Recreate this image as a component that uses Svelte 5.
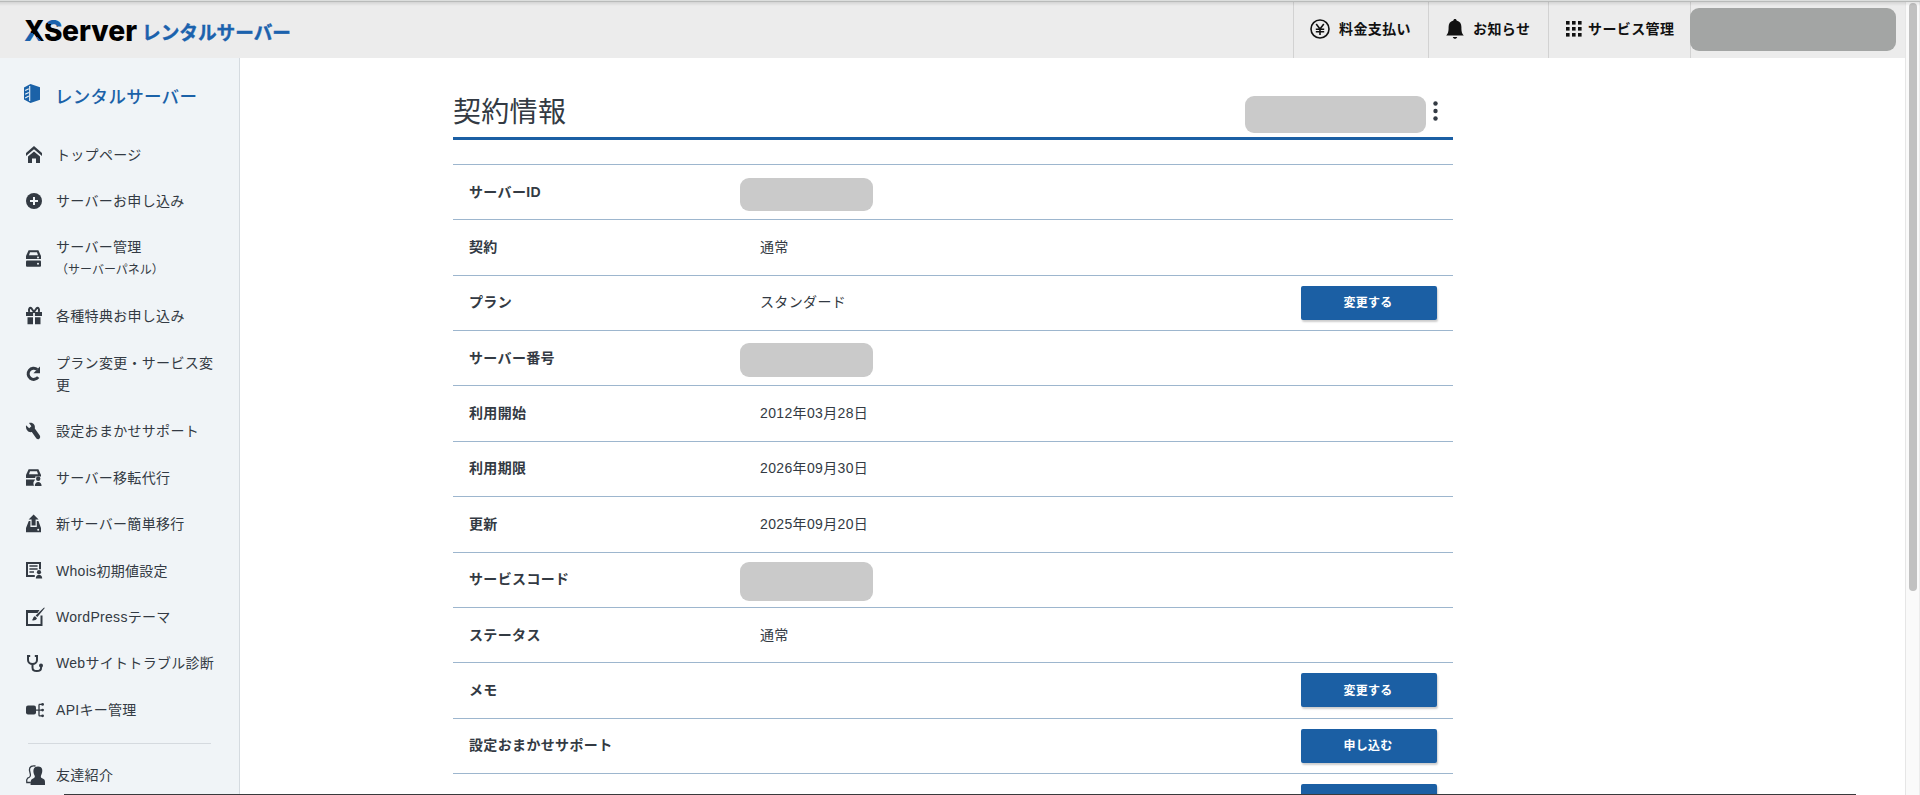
<script lang="ts">
  type MenuItem = { icon: string; label: string; sub?: string };
  type Row = { label: string; value?: string; mask?: number; action?: string };

  const MENU: MenuItem[] = [
    { icon: 'home', label: 'トップページ' },
    { icon: 'plus', label: 'サーバーお申し込み' },
    { icon: 'server', label: 'サーバー管理', sub: '（サーバーパネル）' },
    { icon: 'gift', label: '各種特典お申し込み' },
    { icon: 'reload', label: 'プラン変更・サービス変更' },
    { icon: 'wrench', label: '設定おまかせサポート' },
    { icon: 'serverUser', label: 'サーバー移転代行' },
    { icon: 'upload', label: '新サーバー簡単移行' },
    { icon: 'whois', label: 'Whois初期値設定' },
    { icon: 'brush', label: 'WordPressテーマ' },
    { icon: 'scope', label: 'Webサイトトラブル診断' },
    { icon: 'api', label: 'APIキー管理' },
  ];

  const SUB_MENU: MenuItem[] = [{ icon: 'friends', label: '友達紹介' }];

  // mask = height of the block that hides a private value
  const ROWS: Row[] = [
    { label: 'サーバーID', mask: 33 },
    { label: '契約', value: '通常' },
    { label: 'プラン', value: 'スタンダード', action: '変更する' },
    { label: 'サーバー番号', mask: 34 },
    { label: '利用開始', value: '2012年03月28日' },
    { label: '利用期限', value: '2026年09月30日' },
    { label: '更新', value: '2025年09月20日' },
    { label: 'サービスコード', mask: 39 },
    { label: 'ステータス', value: '通常' },
    { label: 'メモ', action: '変更する' },
    { label: '設定おまかせサポート', action: '申し込む' },
    { label: '', action: ' ' },
  ];
</script>

{#snippet glyph(name: string)}
  <svg class="icon" viewBox="0 0 20 20" width="20" height="20" aria-hidden="true">
    {#if name === 'home'}
      <path d="M0 8 8 1l8 7v3L8 4.2 0 11z" />
      <path d="M2 11.6 8 6.4l6 5.2V18h-4v-4.6H6V18H2z" />
    {:else if name === 'plus'}
      <circle cx="8" cy="10" r="8" />
      <path class="cut" d="M7 6h2v3h3v2H9v3H7v-3H4V9h3z" />
    {:else if name === 'server'}
      <path d="M2.6 1.3h9.8L15 7v3H0V7z" />
      <rect y="11.6" width="15" height="6.2" rx="1" />
      <path class="cut" d="M4 3.3h7l1 3H3z" />
      <circle class="cut" cx="12" cy="8.4" r="1" /><circle class="cut" cx="12" cy="14.7" r="1" />
    {:else if name === 'gift'}
      <path d="M0 6h16v4H0zM1.500 11.2h5.500v7H1.500zM9 11.2h5.500v7H9z" />
      <path class="line" d="M8 6 5.2 2C3.8 1.2 2.4 3 3.2 6M8 6l2.8-4c1.4-.8 2.8 1 2 4" />
      <path class="cut" d="M7.1 7h1.8v3H7.1z" />
    {:else if name === 'reload'}
      <path class="thick" d="M12.200 13.200A5.600 5.600 0 1 1 11.200 5.400" />
      <path d="M14 2.500V9.200H7.400z" />
    {:else if name === 'wrench'}
      <path
        d="M0 3.200 3.200 6.200 5.400 4.200 3 .9C7 0 9.600 3 8.800 6.600l5 6.800c1.400 2.600-1.400 5-3.400 3L5.800 10C3 10.800-.6 8.200 0 3.200z"
      />
    {:else if name === 'serverUser'}
      <path d="M2.6 1.3h9.8L15 7v3H0V7z" />
      <path d="M0 11.600h9.600a5 5 0 0 0-1.600 6.200H0z" />
      <path class="cut" d="M4 3.3h7l1 3H3zM9.300 8.600h6.400v3.500H9.300z" />
      <circle cx="12.2" cy="10.8" r="2.2" />
      <path d="M8.8 18c0-5.4 6.8-5.4 6.8 0z" />
    {:else if name === 'upload'}
      <path d="M7.600.4 12.600 5.600H9.600v6H5.600v-6H2.600z" />
      <path d="M2.800 7H4.400v6h6.400V7h1.600l2.600 7v4.200H0V14z" />
      <circle class="cut" cx="12.2" cy="15.800" r="1" />
    {:else if name === 'whois'}
      <path class="line" d="M14 8.2V2H1v13h7.8" />
      <path d="M3.4 4.2h8.2v1.500H3.400zM3.400 7.200h8.200v1.500H3.400zM3.400 10.200h4.600v1.500H3.400z" />
      <circle cx="13" cy="11.2" r="2.1" />
      <path d="M9.8 17.6c0-5 6.4-5 6.4 0z" />
    {:else if name === 'brush'}
      <path class="line" d="M11 4H1v14h14.5V8.5" />
      <path d="M0 3h13.500l-2 3H0zM19 .8 11.400 10 9.600 8.600 17.800.8zM9 9.300l2 2c-.7 2-3.100 2.300-5.200 2 1.600-.8.9-3.700 3.200-4z" />
    {:else if name === 'scope'}
      <path class="line" d="M4.200 2H2v4c0 5.400 9 5.400 9 0V2H8.800" />
      <path class="line" d="M6.500 10v3.500c0 4.800 8.600 4.800 8.600 0V12" />
      <circle cx="15" cy="11.6" r="2" />
    {:else if name === 'api'}
      <rect y="5.600" width="10" height="9" rx="2" />
      <path class="thin" d="M9 10.1h7M13 4.4v11.4M12.8 4.4h3.6M12.8 15.8h3.6" />
      <circle cx="16.6" cy="4.4" r="1.4" /><circle cx="16.6" cy="10.1" r="1.4" /><circle cx="16.6" cy="15.8" r="1.4" />
    {:else if name === 'friends'}
      <path class="thin" d="M9.500 1C3 0 2.600 4.600 4.200 8.400c1 3-.4 3.800-2.600 4.800C.6 14 .5 16 .8 17.500h4" />
      <path
        d="M12 1.400c5.200 0 5 5 3 9.200-.6 2 .4 2.700 2.600 3.400 1.600.6 1.400 3 1.400 6H4.600c0-3 0-5.400 1.600-6 2.200-.7 3.200-1.600 2.400-3.400C6.600 6.400 6.800 1.400 12 1.400z"
      />
    {/if}
  </svg>
{/snippet}

<div class="window">
  <div class="page">
    <header class="header">
      <svg class="logo" viewBox="0 0 280 58" width="280" height="58">
        <defs>
          <linearGradient id="x-fill" gradientUnits="userSpaceOnUse" x1="26" y1="42" x2="42" y2="22">
            <stop offset="0.42" stop-color="#1b62ad" />
            <stop offset="0.42" stop-color="#000" />
          </linearGradient>
          <linearGradient id="s-fill" gradientUnits="userSpaceOnUse" x1="57" y1="19" x2="50" y2="41">
            <stop offset="0.3" stop-color="#1b62ad" />
            <stop offset="0.3" stop-color="#000" />
          </linearGradient>
        </defs>
        <g class="logo__en">
          <text x="24" y="41" textLength="20.5" lengthAdjust="spacingAndGlyphs" fill="url(#x-fill)">X</text>
          <text x="44" y="41" textLength="18.5" lengthAdjust="spacingAndGlyphs" fill="url(#s-fill)">S</text>
          <text x="62" y="41" textLength="75" lengthAdjust="spacingAndGlyphs">erver</text>
        </g>
        <text class="logo__ja" x="142" y="39.5" textLength="149" lengthAdjust="spacingAndGlyphs">レンタルサーバー</text>
      </svg>

      <nav class="tools">
        <a class="tool tool--pay" href="#pay">
          <svg viewBox="0 0 20 20" width="20" height="20" fill="none" stroke="#111" stroke-width="1.6">
            <circle cx="10" cy="10" r="9" />
            <path d="m6.2 5 3.8 5 3.8-5M10 10v6M5.8 10.2h8.4M5.8 12.8h8.4" />
          </svg>
          <span>料金支払い</span>
        </a>
        <a class="tool tool--news" href="#news">
          <svg viewBox="0 0 18 20" width="18" height="20" fill="#111">
            <path
              d="M9 0c1 0 1.600.7 1.600 1.500C14 2.300 15.400 4.800 15.400 8c0 5 .6 6.500 2.400 8.600H.2C2 14.500 2.600 13 2.600 8c0-3.200 1.400-5.700 4.800-6.500C7.400.7 8 0 9 0zM6.800 18h4.400c-.6 2.400-3.800 2.400-4.400 0z"
            />
          </svg>
          <span>お知らせ</span>
        </a>
        <a class="tool tool--service" href="#service">
          <svg viewBox="0 0 16 16" width="16" height="16" fill="#111">
            {#each [0, 6, 12] as y}
              {#each [0, 6, 12] as x}
                <rect {x} {y} width="3.6" height="3.6" />
              {/each}
            {/each}
          </svg>
          <span>サービス管理</span>
        </a>
        <div class="account"><span class="account__mask"></span></div>
      </nav>
    </header>

    <div class="body">
      <aside class="sidebar">
        <div class="sidebar__title">
          <svg viewBox="0 0 16 19" width="16" height="19" aria-hidden="true">
            <path d="M6.500 0 16 3.200v12.600L6.500 19 0 15.600V3.400z" fill="#1b62a8" />
            <path
              d="m1.200 6.500 3.600-1.800M1.200 10.200l3.600-1.800M1.200 13.900l3.600-1.800M5.700 2v15"
              stroke="#f0f4f7"
              stroke-width="1.1"
            />
          </svg>
          <span>レンタルサーバー</span>
        </div>
        <ul class="menu">
          {#each MENU as item}
            <li class="menu__item">
              {@render glyph(item.icon)}
              <span>
                {item.label}
                {#if item.sub}<small class="menu__sub">{item.sub}</small>{/if}
              </span>
            </li>
          {/each}
        </ul>
        <ul class="menu menu--sub">
          {#each SUB_MENU as item}
            <li class="menu__item">{@render glyph(item.icon)}<span>{item.label}</span></li>
          {/each}
        </ul>
      </aside>

      <main class="content">
        <div class="heading">
          <h1>契約情報</h1>
          <div class="heading__side">
            <span class="heading__mask"></span>
            <svg viewBox="0 0 5 20" width="5" height="20" fill="#333a43">
              <circle cx="2.5" cy="2.5" r="2.2" /><circle cx="2.5" cy="10" r="2.2" /><circle cx="2.5" cy="17.5" r="2.2" />
            </svg>
          </div>
        </div>

        <dl class="table">
          {#each ROWS as row}
            <div class="row">
              <dt>{row.label}</dt>
              <dd>
                {#if row.mask}
                  <span class="mask" style="height: {row.mask}px"></span>
                {:else}
                  <span class="value">{row.value ?? ''}</span>
                {/if}
              </dd>
              {#if row.action}<button type="button">{row.action}</button>{/if}
            </div>
          {/each}
        </dl>
      </main>
    </div>
  </div>

  <div class="scrollbar"><div class="scrollbar__thumb"></div></div>
  <div class="top-edge"></div>
  <div class="bottom-edge"></div>
</div>

<style>
  :global(body) {
    margin: 0;
    background: #fff;
  }

  .window {
    position: relative;
    display: flex;
    height: 795px;
    overflow: hidden;
    color: #333a43;
    font-family: 'Liberation Sans', 'Noto Sans CJK JP', sans-serif;
    font-size: 14px;
    letter-spacing: 0.3px;
  }

  .page {
    flex: 1;
    display: flex;
    flex-direction: column;
  }

  /* header */
  .header {
    display: flex;
    justify-content: space-between;
    flex: none;
    height: 58px;
    background: #ececec;
  }

  .logo {
    display: block;
    overflow: visible;
    letter-spacing: 0;
  }

  .logo__en {
    font-family: Inter, 'Liberation Sans', sans-serif;
    font-size: 29px;
    font-weight: 800;
  }

  .logo__ja {
    font-family: 'Noto Sans CJK JP', sans-serif;
    font-size: 19px;
    font-weight: 700;
    fill: #1b62ad;
    stroke: #1b62ad;
    stroke-width: 0.4px;
  }

  .tools {
    display: flex;
  }

  .tool {
    display: flex;
    align-items: center;
    box-sizing: border-box;
    border-left: 1px solid #d2d2d2;
    color: #111;
    font-weight: 700;
    letter-spacing: 0.4px;
    text-decoration: none;
    white-space: nowrap;
  }

  .tool span {
    margin-top: -2px;
  }

  .tool--pay {
    width: 135px;
    padding-left: 16px;
    gap: 9px;
  }

  .tool--news {
    width: 120px;
    padding-left: 17px;
    gap: 9px;
  }

  .tool--service {
    width: 142px;
    padding-left: 17px;
    gap: 6px;
  }

  .account {
    box-sizing: border-box;
    width: 215px;
    padding-top: 8px;
    border-left: 1px solid #d2d2d2;
  }

  .account__mask {
    display: block;
    width: 206px;
    height: 43px;
    margin-left: -1px;
    border-radius: 9px;
    background: #a3a5a4;
  }

  .body {
    flex: 1;
    display: flex;
    min-height: 0;
  }

  /* sidebar */
  .sidebar {
    box-sizing: border-box;
    flex: none;
    width: 240px;
    padding-top: 23px;
    border-right: 1px solid #d5dbe0;
    background: #f0f4f7;
  }

  .sidebar__title {
    display: flex;
    align-items: center;
    gap: 15px;
    height: 28px;
    padding-left: 24px;
    color: #1b62a8;
    font-size: 17.5px;
    font-weight: 500;
    letter-spacing: 0.3px;
  }

  .sidebar__title svg {
    margin-top: -4px;
  }

  .menu {
    margin: 0;
    padding: 22.6px 0 0;
    list-style: none;
  }

  .menu__item {
    display: flex;
    align-items: center;
    gap: 10px;
    padding: 12px 20px 12px 26px;
    line-height: 22.4px;
  }

  .menu__sub {
    display: block;
    font-size: 12px;
    letter-spacing: 0;
  }

  .menu--sub {
    margin: 9.5px 28px 0;
    padding-top: 8px;
    border-top: 1px solid #d5dadf;
  }

  .menu--sub .menu__item {
    padding-left: 0;
    margin-left: -2px;
  }

  .icon {
    flex: none;
    overflow: visible;
    fill: #333a43;
  }

  .icon .cut {
    fill: #f0f4f7;
  }

  .icon .line,
  .icon .thick,
  .icon .thin {
    fill: none;
    stroke: #333a43;
    stroke-width: 2;
  }

  .icon .thick {
    stroke-width: 3;
  }

  .icon .thin {
    stroke-width: 1.3;
  }

  /* contract table */
  .content {
    width: 1000px;
    margin-left: 213px;
  }

  .heading {
    display: flex;
    justify-content: space-between;
    box-sizing: border-box;
    height: 82px;
    border-bottom: 3px solid #1b5fa4;
  }

  h1 {
    margin: 34px 0 0;
    font-size: 28px;
    font-weight: 400;
    line-height: 42px;
    letter-spacing: 0.3px;
  }

  .heading__side {
    display: flex;
    gap: 7px;
    padding: 38px 15px 0 0;
  }

  .heading__side svg {
    margin-top: 5px;
  }

  .heading__mask {
    width: 181px;
    height: 37px;
    border-radius: 9px;
    background: #cacaca;
  }

  .table {
    margin: 24px 0 0;
    letter-spacing: 0.35px;
  }

  .row {
    display: flex;
    align-items: center;
    box-sizing: border-box;
    height: 55.36px;
    padding: 0 16px;
    border-top: 1px solid #9db6ce;
  }

  dt {
    width: 291px;
    margin-top: -3px;
    font-weight: 700;
  }

  dd {
    flex: 1;
    margin: 0;
  }

  .value {
    display: block;
    margin-top: -3px;
  }

  .mask {
    display: block;
    width: 133px;
    margin: 4px 0 0 -20px;
    border-radius: 9px;
    background: #cacaca;
  }

  button {
    width: 136px;
    height: 34px;
    padding: 0 2px 2px 0;
    border: 0;
    border-radius: 2px;
    background: #1b5fa4;
    box-shadow: 1px 2px 2px rgba(0, 0, 0, 0.2);
    color: #fff;
    font: inherit;
    font-size: 12px;
    font-weight: 700;
    letter-spacing: 0.3px;
  }

  /* window chrome */
  .scrollbar {
    box-sizing: border-box;
    width: 15px;
    padding: 3px 0 0 3px;
    border-right: 1px solid #ececec;
    border-left: 1px solid #e6e6e6;
    background: #fafafa;
  }

  .scrollbar__thumb {
    width: 8px;
    height: 588px;
    border-radius: 4px;
    background: #c1c1c1;
  }

  .top-edge {
    position: absolute;
    inset: 0 0 auto;
    height: 6px;
    background: linear-gradient(#dcdedd 0 1px, #b9bbba 1px 2px, rgba(0, 0, 0, 0.1) 2px, transparent);
  }

  .bottom-edge {
    position: absolute;
    right: 64px;
    bottom: 0;
    left: 64px;
    height: 1px;
    background: #3a3a3c;
    box-shadow: 0 4px 24px rgba(0, 0, 0, 0.1);
  }
</style>
